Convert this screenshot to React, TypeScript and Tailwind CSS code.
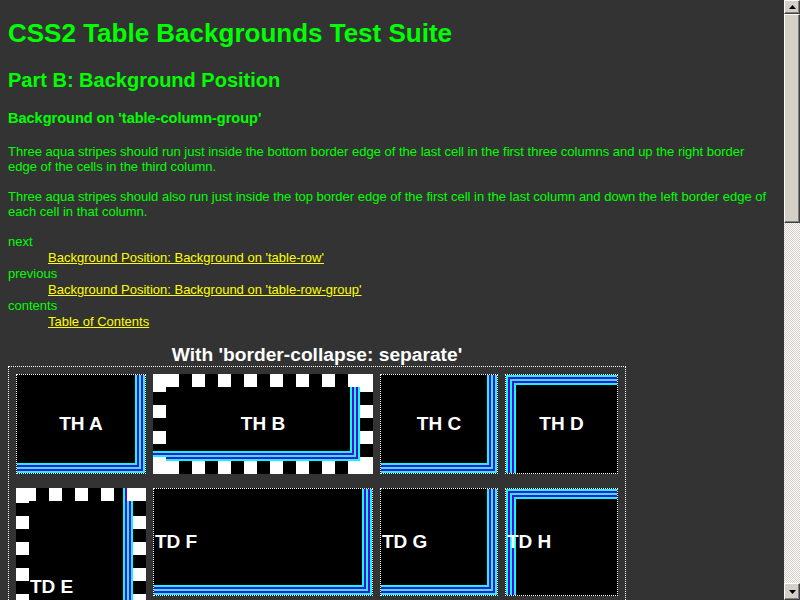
import clsx from "clsx";

// stripe L's drawn as stacked inset shadows, aqua / violet, 2px each
const stripesBR =
  "shadow-[inset_-2px_-2px_0_#00ffff,inset_-4px_-4px_0_#6600cc,inset_-6px_-6px_0_#00ffff,inset_-8px_-8px_0_#6600cc,inset_-10px_-10px_0_#00ffff]";
const stripesTL =
  "shadow-[inset_2px_2px_0_#00ffff,inset_4px_4px_0_#6600cc,inset_6px_6px_0_#00ffff,inset_8px_8px_0_#6600cc,inset_10px_10px_0_#00ffff]";

const segColor: Record<string, string> = {
  w: "bg-white",
  b: "bg-black",
  c: "bg-[#00ffff]",
  p: "bg-[#6600cc]",
};

// thick "dotted" border pieces, old-gecko style square dots
function Strip({ segs, vertical }: { segs: string; vertical?: boolean }) {
  return (
    <div
      className={clsx(
        "flex shrink-0 overflow-hidden",
        vertical ? "w-[13px] flex-col" : "h-[13px]"
      )}
    >
      {segs.split(" ").map((s, i) => {
        const n = Number(s.slice(1));
        return (
          <div
            key={i}
            className={clsx("shrink-0", segColor[s[0]])}
            style={vertical ? { height: n } : { width: n }}
          />
        );
      })}
    </div>
  );
}

const dottedCell = "border border-dotted border-white bg-black";
const thText = "text-[19px] font-bold text-white";

function Th({ label, stripes }: { label: string; stripes: string }) {
  return (
    <div className={clsx(dottedCell, stripes, "flex items-center justify-center", thText)}>
      {label}
    </div>
  );
}

function Td({ label, stripes }: { label: string; stripes: string }) {
  return (
    <div className={clsx(dottedCell, stripes, "flex items-center pl-px", thText)}>
      {label}
    </div>
  );
}

const bandB = "w13 b13 w13 b13 w13 b13 w13 b13 w13 b13 w13 b13 w13 b13 w12";

function ThB() {
  return (
    <div className="flex bg-black">
      <Strip vertical segs="w18 b13 w13 b13 w13 b7 c2 p2 c2 w17" />
      <div className="flex flex-1 flex-col">
        <Strip segs={bandB} />
        <div className={clsx("flex flex-1 items-center justify-center", stripesBR, thText)}>
          TH B
        </div>
        <Strip segs={bandB} />
      </div>
      <Strip vertical segs="w18 b13 w13 b13 w13 b13 w17" />
    </div>
  );
}

function TdE() {
  return (
    <div className="row-span-2 flex bg-black">
      <Strip vertical segs="w15 b13 w13 b13 w13 b13 w13 b13 w13 b13 w13 b13 w13 b13 w13 b13" />
      <div className="flex flex-1 flex-col">
        <Strip segs="w7 b13 w13 b13 w13 b13 w13 b9 c2 p2 w6" />
        <div className={clsx("flex flex-1 items-center pl-px", stripesBR, thText)}>TD E</div>
        <Strip segs="w7 b13 w13 b13 w13 b13 w13 b13 w6" />
      </div>
      <Strip vertical segs="w13 b15 w13 b13 w13 b13 w13 b13 w13 b13 w13 b13 w13 b13 w13 b13" />
    </div>
  );
}

const bevel =
  "border border-t-white border-l-white border-r-[#404040] border-b-[#404040] bg-[#d4d0c8] shadow-[inset_-1px_-1px_0_#808080]";

function Scrollbar() {
  return (
    <div className="flex w-4 shrink-0 flex-col">
      <div className={clsx(bevel, "flex h-[14px] items-center justify-center")}>
        <svg width="7" height="4" viewBox="0 0 7 4">
          <path d="M3.5 0 7 4H0Z" fill="#000" />
        </svg>
      </div>
      <div className={clsx(bevel, "h-[209px]")} />
      <div className="flex-1 bg-[repeating-conic-gradient(#d4d0c8_0%_25%,#ffffff_0%_50%)] bg-[length:2px_2px]" />
      <div className={clsx(bevel, "flex h-[17px] items-center justify-center")}>
        <svg width="7" height="4" viewBox="0 0 7 4">
          <path d="M0 0H7L3.5 4Z" fill="#000" />
        </svg>
      </div>
    </div>
  );
}

const links = [
  { term: "next", label: "Background Position: Background on 'table-row'" },
  { term: "previous", label: "Background Position: Background on 'table-row-group'" },
  { term: "contents", label: "Table of Contents" },
];

export default function App() {
  return (
    <div className="flex h-[600px] w-[800px] overflow-hidden bg-[#333333] font-['Liberation_Sans',Arial,sans-serif] text-[#00ff00]">
      <div className="flex-1 overflow-hidden px-2">
        <h1 className="mt-[18px] text-[26px] leading-[30px] font-bold">
          CSS2 Table Backgrounds Test Suite
        </h1>
        <h2 className="mt-[20px] text-[20px] leading-[24px] font-bold">
          Part B: Background Position
        </h2>
        <h3 className="mt-[17px] text-[14.5px] leading-[18px] font-bold">
          Background on 'table-column-group'
        </h3>
        <p className="mt-[17px] text-[13px] leading-[15px]">
          Three aqua stripes should run just inside the bottom border edge of the last cell in the
          first three columns and up the right border edge of the cells in the third column.
        </p>
        <p className="mt-[15px] text-[13px] leading-[15px]">
          Three aqua stripes should also run just inside the top border edge of the first cell in
          the last column and down the left border edge of each cell in that column.
        </p>
        <dl className="mt-[15px] text-[13px] leading-4">
          {links.map(({ term, label }) => (
            <div key={term}>
              <dt>{term}</dt>
              <dd className="pl-10">
                <a className="text-[#ffff00] underline">{label}</a>
              </dd>
            </div>
          ))}
        </dl>

        <div className="mt-[13px] w-[618px]">
          <div className="text-center text-[19.2px] leading-[23px] font-bold text-white">
            With 'border-collapse: separate'
          </div>
          <div className="grid grid-cols-[130px_220px_118px_113px] grid-rows-[100px_108px_76px] gap-x-[7px] gap-y-[14px] border border-dotted border-white p-[7px]">
            <Th label="TH A" stripes={stripesBR} />
            <ThB />
            <Th label="TH C" stripes={stripesBR} />
            <Th label="TH D" stripes={stripesTL} />
            <TdE />
            <Td label="TD F" stripes={stripesBR} />
            <Td label="TD G" stripes={stripesBR} />
            <Td label="TD H" stripes={stripesTL} />
          </div>
        </div>
      </div>
      <Scrollbar />
    </div>
  );
}
